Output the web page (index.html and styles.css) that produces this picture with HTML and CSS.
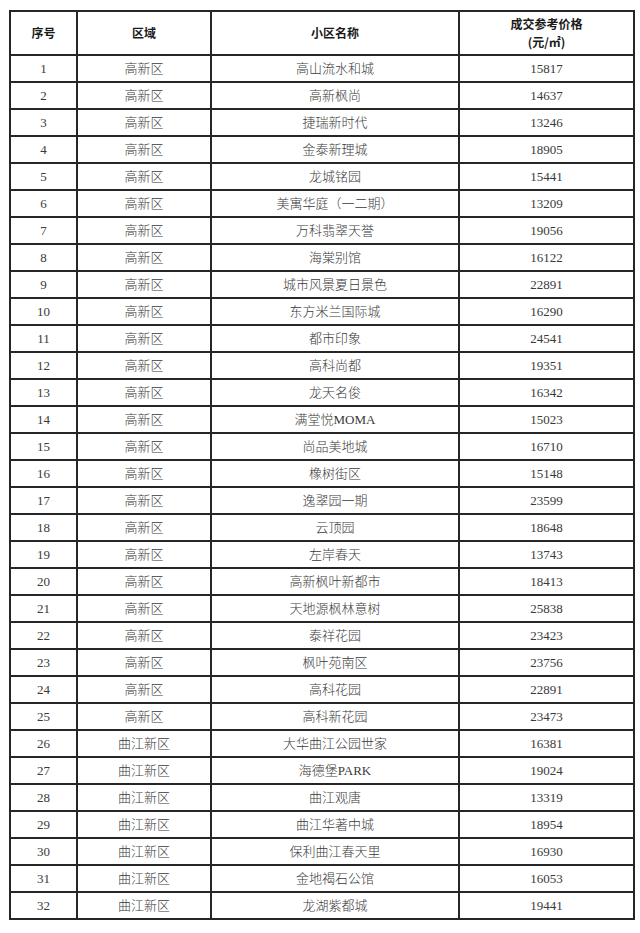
FILE: index.html
```html
<!DOCTYPE html>
<html lang="zh-CN">
<head>
<meta charset="utf-8">
<title>成交参考价格</title>
<link rel="stylesheet" href="styles.css">
</head>
<body>
<table class="price-table">
<colgroup>
<col class="c-no"><col class="c-area"><col class="c-name"><col class="c-price">
</colgroup>
<thead>
<tr><th>序号</th><th>区域</th><th>小区名称</th><th>成交参考价格<br>(元/㎡)</th></tr>
</thead>
<tbody>
<tr><td>1</td><td>高新区</td><td>高山流水和城</td><td>15817</td></tr>
<tr><td>2</td><td>高新区</td><td>高新枫尚</td><td>14637</td></tr>
<tr><td>3</td><td>高新区</td><td>捷瑞新时代</td><td>13246</td></tr>
<tr><td>4</td><td>高新区</td><td>金泰新理城</td><td>18905</td></tr>
<tr><td>5</td><td>高新区</td><td>龙城铭园</td><td>15441</td></tr>
<tr><td>6</td><td>高新区</td><td>美寓华庭（一二期）</td><td>13209</td></tr>
<tr><td>7</td><td>高新区</td><td>万科翡翠天誉</td><td>19056</td></tr>
<tr><td>8</td><td>高新区</td><td>海棠别馆</td><td>16122</td></tr>
<tr><td>9</td><td>高新区</td><td>城市风景夏日景色</td><td>22891</td></tr>
<tr><td>10</td><td>高新区</td><td>东方米兰国际城</td><td>16290</td></tr>
<tr><td>11</td><td>高新区</td><td>都市印象</td><td>24541</td></tr>
<tr><td>12</td><td>高新区</td><td>高科尚都</td><td>19351</td></tr>
<tr><td>13</td><td>高新区</td><td>龙天名俊</td><td>16342</td></tr>
<tr><td>14</td><td>高新区</td><td>满堂悦MOMA</td><td>15023</td></tr>
<tr><td>15</td><td>高新区</td><td>尚品美地城</td><td>16710</td></tr>
<tr><td>16</td><td>高新区</td><td>橡树街区</td><td>15148</td></tr>
<tr><td>17</td><td>高新区</td><td>逸翠园一期</td><td>23599</td></tr>
<tr><td>18</td><td>高新区</td><td>云顶园</td><td>18648</td></tr>
<tr><td>19</td><td>高新区</td><td>左岸春天</td><td>13743</td></tr>
<tr><td>20</td><td>高新区</td><td>高新枫叶新都市</td><td>18413</td></tr>
<tr><td>21</td><td>高新区</td><td>天地源枫林意树</td><td>25838</td></tr>
<tr><td>22</td><td>高新区</td><td>泰祥花园</td><td>23423</td></tr>
<tr><td>23</td><td>高新区</td><td>枫叶苑南区</td><td>23756</td></tr>
<tr><td>24</td><td>高新区</td><td>高科花园</td><td>22891</td></tr>
<tr><td>25</td><td>高新区</td><td>高科新花园</td><td>23473</td></tr>
<tr><td>26</td><td>曲江新区</td><td>大华曲江公园世家</td><td>16381</td></tr>
<tr><td>27</td><td>曲江新区</td><td>海德堡PARK</td><td>19024</td></tr>
<tr><td>28</td><td>曲江新区</td><td>曲江观唐</td><td>13319</td></tr>
<tr><td>29</td><td>曲江新区</td><td>曲江华著中城</td><td>18954</td></tr>
<tr><td>30</td><td>曲江新区</td><td>保利曲江春天里</td><td>16930</td></tr>
<tr><td>31</td><td>曲江新区</td><td>金地褐石公馆</td><td>16053</td></tr>
<tr><td>32</td><td>曲江新区</td><td>龙湖紫都城</td><td>19441</td></tr>
</tbody>
</table>
</body>
</html>
```

FILE: styles.css
```css
html, body {
  margin: 0;
  padding: 0;
  background: #ffffff;
}
body {
  padding: 10px 0 0 9px;
}
.price-table {
  border-collapse: collapse;
  table-layout: fixed;
  width: 624px;
  font-family: "Liberation Serif", "Noto Sans CJK SC", serif;
  font-size: 13px;
  color: #3a3a3a;
}
.c-no { width: 67px; }
.c-area { width: 134px; }
.c-name { width: 248px; }
.c-price { width: 175px; }
.price-table th,
.price-table td {
  border: 2px solid #262626;
  text-align: center;
  padding: 0;
  vertical-align: middle;
}
.price-table th {
  height: 42px;
  font-family: "Noto Sans CJK SC", sans-serif;
  font-weight: 700;
  font-size: 12px;
  line-height: 18px;
  color: #1a1a1a;
}
.price-table td {
  height: 25px;
  font-weight: 300;
  line-height: 16px;
}
```
